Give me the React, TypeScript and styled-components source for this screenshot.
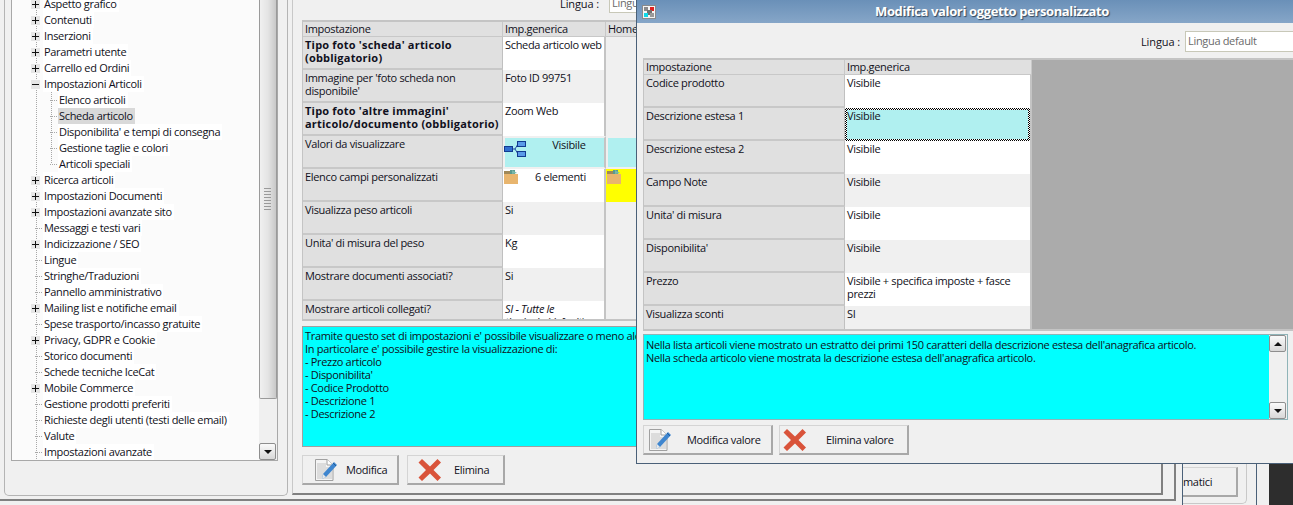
import React from "react";
import styled, { createGlobalStyle } from "styled-components";

const Global = createGlobalStyle`
  html, body { margin: 0; padding: 0; background: #f0f0f0; }
  * { box-sizing: border-box; }
`;

const FONT = `"Open Sans", "Noto Sans", "Liberation Sans", sans-serif`;
const NAVY = "#4a6078";

const Page = styled.div`
  position: relative;
  width: 1293px;
  height: 505px;
  overflow: hidden;
  display: flex;
  background: #f0f0f0;
  font: 400 11px/13px ${FONT};
  letter-spacing: -0.32px;
  color: #101020;
`;
const OuterPanel = styled.div`
  flex: none;
  width: 1176px;
  height: 501px;
  display: flex;
  border-right: 2px solid #808080;
  border-bottom: 2px solid #808080;
`;
const LeftGroup = styled.div`
  flex: none;
  margin-left: 4px;
  width: 284px;
  height: 496px;
  padding: 0 9px 0 6px;
  border: 1px solid #b4b4b4;
  border-top: none;
  border-radius: 0 0 5px 5px;
`;
const TreeBox = styled.div`
  height: 461px;
  display: flex;
  overflow: hidden;
  background: #fbfbfb;
  border: 1px solid #a8a8a8;
  border-top: none;
`;
const TreeList = styled.div`
  flex: 1;
  margin-top: -4px;
  background: repeating-linear-gradient(#a8a8a8 0 1px, transparent 1px 2px) 24px 0 / 1px 100% no-repeat;
`;
const SubTree = styled.div`
  background: repeating-linear-gradient(#a8a8a8 0 1px, transparent 1px 2px) 39px 0 / 1px calc(100% - 8px) no-repeat;
`;
const TreeRow = styled.div`
  display: flex;
  align-items: center;
  height: 16px;
`;
const Gutter = styled.span<{ $level: number }>`
  flex: none;
  display: flex;
  align-items: center;
  justify-content: flex-end;
  width: ${(p) => (p.$level === 0 ? 31 : 46)}px;
`;
const Tick = styled.span`
  width: 8px;
  height: 1px;
  background: repeating-linear-gradient(90deg, #a8a8a8 0 1px, transparent 1px 2px);
`;
const Expander = styled.span`
  position: relative;
  width: 9px;
  height: 9px;
  margin-right: 3px;
  background: #e6e6e6;
  &::before {
    content: "";
    position: absolute;
    left: 1px;
    top: 4px;
    width: 7px;
    height: 1px;
    background: #111;
  }
`;
const Plus = styled(Expander)`
  &::after {
    content: "";
    position: absolute;
    left: 4px;
    top: 1px;
    width: 1px;
    height: 7px;
    background: #111;
  }
`;
const TreeLabel = styled.span<{ $selected?: boolean }>`
  height: 16px;
  line-height: 16px;
  padding: 0 2px 0 1px;
  white-space: nowrap;
  background: ${(p) => (p.$selected ? "#d9d9d9" : "#fff")};
`;
const Scrollbar = styled.div`
  flex: none;
  width: 18px;
  display: flex;
  flex-direction: column;
  background: #f0f0f0;
`;
const Thumb = styled.div`
  height: 399px;
  position: relative;
  border: 1px solid #9a9a9a;
  border-top: none;
  border-radius: 0 0 2px 2px;
  background: linear-gradient(90deg, #f0f0f0, #e4e4e4 50%, #c8c8c8);
  &::after {
    content: "";
    position: absolute;
    left: 4px;
    top: 187px;
    width: 7px;
    height: 23px;
    background: radial-gradient(circle, #9a9a9a 0 0.7px, transparent 1px) 0 0 / 2px 3px;
  }
`;
const Spacer = styled.div`
  flex: 1;
`;
const ScrollButton = styled.div<{ $up?: boolean }>`
  flex: none;
  display: flex;
  align-items: center;
  justify-content: center;
  width: 17px;
  height: 17px;
  border: 1px solid #8e8e8e;
  border-radius: 2px;
  background: linear-gradient(#fafafa, #d8d8d8);
  &::before {
    content: "";
    border-left: 4px solid transparent;
    border-right: 4px solid transparent;
    ${(p) => (p.$up ? "border-bottom: 4px solid #111;" : "border-top: 4px solid #111;")}
  }
`;
const MainPanel = styled.div`
  flex: none;
  margin-left: 4px;
  width: 871px;
  height: 495px;
  padding-left: 9px;
  border-left: 1px solid #c8c8c8;
  border-right: 2px solid #808080;
  border-bottom: 2px solid #808080;
`;
const LinguaRow = styled.div`
  display: flex;
  align-items: center;
  gap: 10px;
  margin-top: -7px;
  height: 20px;
  padding-left: 258px;
  margin-bottom: 7px;
`;
const LinguaLabel = styled.span`
  white-space: nowrap;
  letter-spacing: -0.1px;
`;
const LinguaInput = styled.div<{ $width: number; $height: number }>`
  flex: none;
  width: ${(p) => p.$width}px;
  height: ${(p) => p.$height}px;
  padding: 2px;
  background: #fff;
  border: 1px solid #c8c8b8;
  color: #6a6a6a;
`;
const DataGrid = styled.div<{ $columns: string; $height: number; $width?: number }>`
  display: grid;
  grid-template-columns: ${(p) => p.$columns};
  grid-auto-rows: 33px;
  grid-template-rows: 15px;
  width: ${(p) => (p.$width ? `${p.$width}px` : "auto")};
  height: ${(p) => p.$height}px;
  overflow: hidden;
  border: 1px solid #c4c4c4;
  border-bottom-width: 2px;
  border-top-width: 2px;
  align-content: start;
`;
const HeadCell = styled.div`
  padding: 0 2px;
  white-space: nowrap;
  overflow: hidden;
  background: #e0e0e0;
  border-right: 1px solid #c8c8c8;
  border-bottom: 1px solid #c8c8c8;
`;
const LabelCell = styled.div<{ $bold?: boolean }>`
  padding: 1px 2px;
  background: #e0e0e0;
  border-right: 1px solid #c0c0c0;
  border-bottom: 2px solid #c8c8c8;
  font-weight: ${(p) => (p.$bold ? 700 : 400)};
  letter-spacing: ${(p) => (p.$bold ? "0.2px" : "inherit")};
`;
const ValueCell = styled.div<{ $alt?: boolean; $italic?: boolean; $edge?: boolean }>`
  padding: 1px 0 0 2px;
  background: ${(p) => (p.$alt ? "#f0f0f0" : "#fff")};
  font-style: ${(p) => (p.$italic ? "italic" : "normal")};
  border-right: ${(p) => (p.$edge ? "2px solid #c4c4c4" : "none")};
`;
const IconValue = styled(ValueCell)`
  display: flex;
  align-items: flex-start;
  padding: 1px 1px 2px 1px;
`;
const CyanValue = styled.div<{ $edge?: boolean }>`
  display: flex;
  align-items: flex-start;
  background: #b0f0f0;
  background-clip: padding-box;
  border: 2px solid #f0f0f0;
  border-right: ${(p) => (p.$edge ? "2px solid #c4c4c4" : "none")};
`;
const YellowValue = styled.div`
  padding: 1px 0 0 1px;
  background: #ffff00;
`;
const CenterText = styled.span`
  flex: 1;
  text-align: center;
`;
const SelectedFrame = styled.div`
  padding: 2px;
  border-right: 2px solid #c4c4c4;
  background: repeating-conic-gradient(#000 0 25%, #fff 0 50%) 0 0 / 2px 2px;
  background-clip: padding-box;
`;
const SelectedInner = styled.div`
  height: 100%;
  line-height: 11px;
  background: #b0f0f0;
`;
const GrayArea = styled.div`
  grid-column: 3;
  grid-row: 1 / span 9;
  background: #ababab;
`;
const InfoBox = styled.div`
  margin-top: 5px;
  width: 852px;
  height: 121px;
  padding: 2px;
  background: #00ffff;
  border: 1px solid #a0a0a0;
  white-space: pre-line;
`;
const ButtonRow = styled.div<{ $gap: number; $top: number }>`
  display: flex;
  gap: ${(p) => p.$gap}px;
  margin-top: ${(p) => p.$top}px;
`;
const ActionButton = styled.button<{ $width: number; $height: number; $inset: number; $textGap: number }>`
  display: flex;
  align-items: center;
  width: ${(p) => p.$width}px;
  height: ${(p) => p.$height}px;
  padding: 0 0 0 ${(p) => p.$inset}px;
  gap: ${(p) => p.$textGap}px;
  font: inherit;
  letter-spacing: inherit;
  color: inherit;
  background: #f0f0f0;
  border: 1px solid #d4d4d4;
  border-right: 2px solid #a8a8a8;
  border-bottom: 2px solid #a8a8a8;
`;
const Dialog = styled.div`
  position: absolute;
  left: 636px;
  top: 0;
  width: 660px;
  height: 464px;
  background: #f0f0f0;
  border-left: 1px solid ${NAVY};
  border-bottom: 1px solid ${NAVY};
`;
const TitleBar = styled.div`
  display: flex;
  align-items: center;
  height: 23px;
  padding-left: 5px;
  background: linear-gradient(#6a90b8, #86a6c8);
`;
const TitleText = styled.div`
  margin-left: 219px;
  font-size: 13px;
  font-weight: 700;
  letter-spacing: -0.37px;
  white-space: nowrap;
  color: #fff;
  text-shadow: 1px 1px 1px #33475c;
`;
const DialogLingua = styled.div`
  display: flex;
  align-items: center;
  justify-content: flex-end;
  gap: 5px;
  height: 35px;
  padding-top: 1px;
  margin-right: 1px;
`;
const DialogBody = styled.div`
  padding: 0 0 0 6px;
`;
const DialogGridWrap = styled.div`
  margin-right: -4px;
`;
const DialogInfo = styled.div`
  display: flex;
  margin-top: 3px;
  width: 645px;
  height: 86px;
  border: 1px solid #8fb4b8;
  background: #00ffff;
`;
const DialogInfoText = styled.div`
  flex: 1;
  padding: 3px 2px;
  white-space: pre-line;
`;
const DialogScroll = styled.div`
  flex: none;
  width: 18px;
  display: flex;
  flex-direction: column;
  justify-content: space-between;
  background: #f0f0f0;
`;
const ThirdWindow = styled.div`
  flex: none;
  margin-left: 6px;
  width: 75px;
  height: 505px;
  border-left: 1px solid ${NAVY};
  border-right: 1px solid ${NAVY};
`;
const ThirdGroup = styled.div`
  width: 64px;
  height: 504px;
  padding-top: 467px;
  border-right: 1px solid #c8c8c8;
  border-bottom: 1px solid #c8c8c8;
  border-radius: 0 0 5px 0;
`;
const ClippedButton = styled.div`
  width: 55px;
  height: 30px;
  line-height: 28px;
  border-top: 1px solid #d4d4d4;
  border-right: 2px solid #a8a8a8;
  border-bottom: 2px solid #a8a8a8;
`;
const DarkBlock = styled.div`
  flex: 1;
  margin-left: 12px;
  background: #2d2d2d;
`;
const NetSvg = styled.svg`
  flex: none;
  margin: 2px 8px 0 -1px;
`;
const FolderSvg = styled.svg`
  flex: none;
  display: block;
`;

const DocIcon = () => (
  <svg width="24" height="24" viewBox="0 0 24 24">
    <path d="M1.5 1.5H13L19 7V22.5H1.5Z" fill="#f4f4f4" stroke="#a0a0a0" />
    <path d="M13 1.5V7H19" fill="#fff" stroke="#a0a0a0" />
    <rect x="3" y="5" width="9" height="16" fill="#dcdcdc" />
    <rect x="10" y="9" width="8" height="12" fill="#dcdcdc" />
    <path d="M20 4 L23 7 L12 19 L8 21 L9 16 Z" fill="#3f86cf" />
    <path d="M9 16 L12 19 L8 21 Z" fill="#e8e8e8" />
    <path d="M19 5 L22 8" stroke="#1f5f9f" strokeWidth="1" />
  </svg>
);
const XIcon = () => (
  <svg width="24" height="24" viewBox="0 0 24 24">
    <path d="M4 1 L12 8.5 L19.5 1 L23 4.5 L15.5 12 L23 19.5 L19.5 23 L12 15.5 L4 23 L0.5 19.5 L8 12 L0.5 4.5 Z" fill="#d9533a" />
  </svg>
);
const NetIcon = () => (
  <NetSvg width="22" height="17" viewBox="0 0 22 17">
    <path d="M8 9 H11 L14 4 H16 M11 9 L14 14 H16" fill="none" stroke="#1f4aa0" />
    <rect x="0.5" y="6.5" width="8" height="5" fill="#2f6fd0" stroke="#123a90" />
    <rect x="13.5" y="1.5" width="8" height="5" fill="#5a9ae8" stroke="#123a90" />
    <rect x="13.5" y="11.5" width="8" height="5" fill="#5a9ae8" stroke="#123a90" />
  </NetSvg>
);
const FolderIcon = () => (
  <FolderSvg width="14" height="14" viewBox="0 0 14 14">
    <rect x="0" y="1" width="6" height="4" fill="#a08858" />
    <path d="M6 0 L11 0 L11 4 L6 4 Z" fill="#5a9a90" />
    <path d="M8 0 L13 3 L8 4 Z" fill="#7ab8a8" />
    <rect x="0" y="4" width="14" height="10" fill="#e8b56e" />
  </FolderSvg>
);
const WinIcon = () => (
  <svg width="14" height="14" viewBox="0 0 14 14">
    <rect x="0.5" y="0.5" width="13" height="13" fill="#f4f4f4" stroke="#8a8a8a" />
    <rect x="2" y="2" width="4" height="4" fill="#8a8a8a" />
    <rect x="8" y="2" width="4" height="4" fill="#e02020" />
    <rect x="5" y="5" width="5" height="5" fill="#707070" />
    <rect x="2" y="8" width="4" height="4" fill="#10d8e8" />
    <rect x="8" y="8" width="4" height="4" fill="#9a9a9a" />
  </svg>
);

type Node = { label: string; expand?: "+" | "-"; children?: string[]; selected?: string };
const tree: Node[] = [
  { label: "Aspetto grafico", expand: "+" },
  { label: "Contenuti", expand: "+" },
  { label: "Inserzioni", expand: "+" },
  { label: "Parametri utente", expand: "+" },
  { label: "Carrello ed Ordini", expand: "+" },
  {
    label: "Impostazioni Articoli",
    expand: "-",
    selected: "Scheda articolo",
    children: ["Elenco articoli", "Scheda articolo", "Disponibilita' e tempi di consegna", "Gestione taglie e colori", "Articoli speciali"],
  },
  { label: "Ricerca articoli", expand: "+" },
  { label: "Impostazioni Documenti", expand: "+" },
  { label: "Impostazioni avanzate sito", expand: "+" },
  { label: "Messaggi e testi vari" },
  { label: "Indicizzazione / SEO", expand: "+" },
  { label: "Lingue" },
  { label: "Stringhe/Traduzioni" },
  { label: "Pannello amministrativo" },
  { label: "Mailing list e notifiche email", expand: "+" },
  { label: "Spese trasporto/incasso gratuite" },
  { label: "Privacy, GDPR e Cookie", expand: "+" },
  { label: "Storico documenti" },
  { label: "Schede tecniche IceCat" },
  { label: "Mobile Commerce", expand: "+" },
  { label: "Gestione prodotti preferiti" },
  { label: "Richieste degli utenti (testi delle email)" },
  { label: "Valute" },
  { label: "Impostazioni avanzate" },
];

const dialogRows: [string, string][] = [
  ["Codice prodotto", "Visibile"],
  ["Descrizione estesa 1", "Visibile"],
  ["Descrizione estesa 2", "Visibile"],
  ["Campo Note", "Visibile"],
  ["Unita' di misura", "Visibile"],
  ["Disponibilita'", "Visibile"],
  ["Prezzo", "Visibile + specifica imposte + fasce prezzi"],
  ["Visualizza sconti", "SI"],
];

const mainInfo = `Tramite questo set di impostazioni e' possibile visualizzare o meno alcuni dati
In particolare e' possibile gestire la visualizzazione di:
- Prezzo articolo
- Disponibilita'
- Codice Prodotto
- Descrizione 1
- Descrizione 2`;

export default function App() {
  return (
    <Page>
      <Global />
      <OuterPanel>
        <LeftGroup>
          <TreeBox>
            <TreeList>
              {tree.map((n) => (
                <React.Fragment key={n.label}>
                  <TreeRow>
                    <Gutter $level={0}>
                      {n.expand === "+" ? <Plus /> : n.expand === "-" ? <Expander /> : <Tick />}
                    </Gutter>
                    <TreeLabel>{n.label}</TreeLabel>
                  </TreeRow>
                  {n.children && (
                    <SubTree>
                      {n.children.map((c) => (
                        <TreeRow key={c}>
                          <Gutter $level={1}>
                            <Tick />
                          </Gutter>
                          <TreeLabel $selected={c === n.selected}>{c}</TreeLabel>
                        </TreeRow>
                      ))}
                    </SubTree>
                  )}
                </React.Fragment>
              ))}
            </TreeList>
            <Scrollbar>
              <Thumb />
              <Spacer />
              <ScrollButton />
            </Scrollbar>
          </TreeBox>
        </LeftGroup>
        <MainPanel>
          <LinguaRow>
            <LinguaLabel>Lingua :</LinguaLabel>
            <LinguaInput $width={140} $height={20}>Lingua default</LinguaInput>
          </LinguaRow>
          <DataGrid $columns="200px 103px 1fr" $height={301} $width={852}>
            <HeadCell>Impostazione</HeadCell>
            <HeadCell>Imp.generica</HeadCell>
            <HeadCell>Home page</HeadCell>

            <LabelCell $bold>Tipo foto 'scheda' articolo (obbligatorio)</LabelCell>
            <ValueCell $edge>Scheda articolo web</ValueCell>
            <ValueCell $alt />

            <LabelCell>Immagine per 'foto scheda non disponibile'</LabelCell>
            <ValueCell $alt $edge>Foto ID 99751</ValueCell>
            <ValueCell $alt />

            <LabelCell $bold>Tipo foto 'altre immagini' articolo/documento (obbligatorio)</LabelCell>
            <ValueCell $edge>Zoom Web</ValueCell>
            <ValueCell $alt />

            <LabelCell>Valori da visualizzare</LabelCell>
            <CyanValue $edge>
              <NetIcon />
              <CenterText>Visibile</CenterText>
            </CyanValue>
            <CyanValue />

            <LabelCell>Elenco campi personalizzati</LabelCell>
            <IconValue $edge>
              <FolderIcon />
              <CenterText>6 elementi</CenterText>
            </IconValue>
            <YellowValue>
              <FolderIcon />
            </YellowValue>

            <LabelCell>Visualizza peso articoli</LabelCell>
            <ValueCell $alt $edge>Si</ValueCell>
            <ValueCell $alt />

            <LabelCell>Unita' di misura del peso</LabelCell>
            <ValueCell $edge>Kg</ValueCell>
            <ValueCell $alt />

            <LabelCell>Mostrare documenti associati?</LabelCell>
            <ValueCell $alt $edge>Si</ValueCell>
            <ValueCell $alt />

            <LabelCell>Mostrare articoli collegati?</LabelCell>
            <ValueCell $italic $edge>
              SI - Tutte le
              <br />
              tipologie (default)
            </ValueCell>
            <ValueCell $alt />
          </DataGrid>
          <InfoBox>{mainInfo}</InfoBox>
          <ButtonRow $gap={8} $top={8}>
            <ActionButton $width={97} $height={30} $inset={11} $textGap={8}>
              <DocIcon />
              Modifica
            </ActionButton>
            <ActionButton $width={98} $height={30} $inset={10} $textGap={12}>
              <XIcon />
              Elimina
            </ActionButton>
          </ButtonRow>
        </MainPanel>
      </OuterPanel>
      <ThirdWindow>
        <ThirdGroup>
          <ClippedButton>matici</ClippedButton>
        </ThirdGroup>
      </ThirdWindow>
      <DarkBlock />

      <Dialog>
        <TitleBar>
          <WinIcon />
          <TitleText>Modifica valori oggetto personalizzato</TitleText>
        </TitleBar>
        <DialogLingua>
          <LinguaLabel>Lingua :</LinguaLabel>
          <LinguaInput $width={110} $height={21}>Lingua default</LinguaInput>
        </DialogLingua>
        <DialogBody>
          <DialogGridWrap>
            <DataGrid $columns="201px 187px 1fr" $height={273}>
              <HeadCell>Impostazione</HeadCell>
              <HeadCell>Imp.generica</HeadCell>
              <GrayArea />
              {dialogRows.map(([label, value], i) => (
                <React.Fragment key={label}>
                  <LabelCell>{label}</LabelCell>
                  {i === 1 ? (
                    <SelectedFrame>
                      <SelectedInner>{value}</SelectedInner>
                    </SelectedFrame>
                  ) : (
                    <ValueCell $alt={i % 2 === 1} $edge>
                      {value}
                    </ValueCell>
                  )}
                </React.Fragment>
              ))}
            </DataGrid>
          </DialogGridWrap>
          <DialogInfo>
            <DialogInfoText>
              {`Nella lista articoli viene mostrato un estratto dei primi 150 caratteri della descrizione estesa dell'anagrafica articolo.
Nella scheda articolo viene mostrata la descrizione estesa dell'anagrafica articolo.`}
            </DialogInfoText>
            <DialogScroll>
              <ScrollButton $up />
              <ScrollButton />
            </DialogScroll>
          </DialogInfo>
          <ButtonRow $gap={6} $top={5}>
            <ActionButton $width={130} $height={30} $inset={4} $textGap={15}>
              <DocIcon />
              Modifica valore
            </ActionButton>
            <ActionButton $width={130} $height={30} $inset={3} $textGap={19}>
              <XIcon />
              Elimina valore
            </ActionButton>
          </ButtonRow>
        </DialogBody>
      </Dialog>
    </Page>
  );
}
